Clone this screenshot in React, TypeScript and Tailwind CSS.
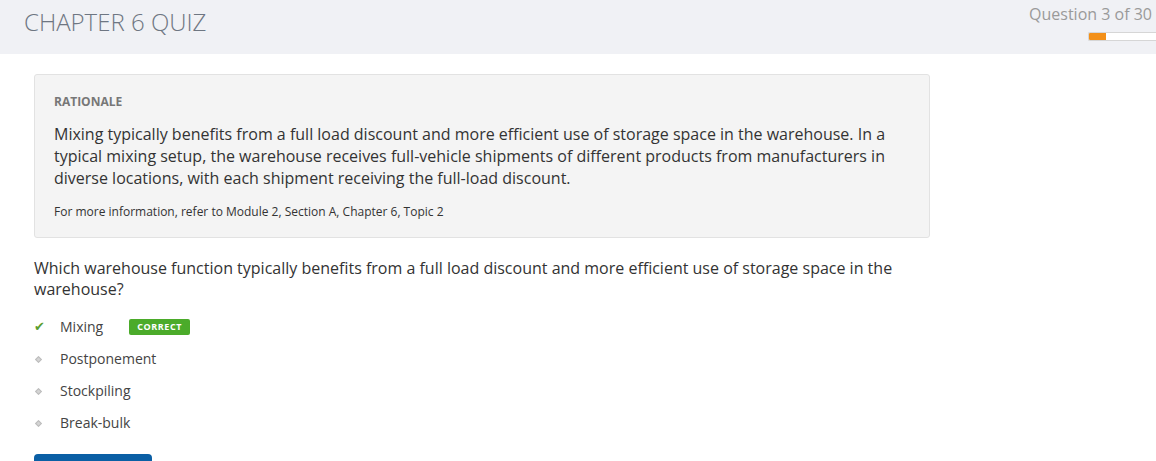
const options = [
  { label: "Mixing", correct: true },
  { label: "Postponement", correct: false },
  { label: "Stockpiling", correct: false },
  { label: "Break-bulk", correct: false },
];

const App = () => {
  return (
    <div className="min-h-screen bg-white font-['Open_Sans',_'Noto_Sans',_sans-serif] text-[#333]">
      {/* Header */}
      <header className="h-[54px] bg-[#f0f1f5] flex justify-between">
        <h1 className="pl-[24px] pt-[6px] text-[24px] font-light leading-[32px] text-[#6e7682]">
          CHAPTER 6 QUIZ
        </h1>
        <div className="flex flex-col items-end pt-[3px]">
          <div className="pr-[4px] text-[16px] leading-[22px] text-[#9a9a9a]">
            Question 3 of 30
          </div>
          <div className="mt-[7px] w-[68px] h-[9px] border border-[#d6d6d6] border-r-0 bg-white rounded-l-[2px] overflow-hidden">
            <div className="h-full w-[17px] bg-[#f39019]" />
          </div>
        </div>
      </header>

      <main className="px-[34px] pt-[20px] w-[930px] box-content">
        {/* Rationale card */}
        <div className="w-[896px] bg-[#f4f4f4] border border-[#e2e2e2] rounded-[3px] px-[19px] pt-[19px] pb-[17px]">
          <div className="text-[12px] font-bold leading-[16px] text-[#777]">
            RATIONALE
          </div>
          <p className="mt-[13px] text-[16px] leading-[22px] text-[#333]">
            Mixing typically benefits from a full load discount and more
            efficient use of storage space in the warehouse. In a typical mixing
            setup, the warehouse receives full-vehicle shipments of different
            products from manufacturers in diverse locations, with each shipment
            receiving the full-load discount.
          </p>
          <p className="mt-[15px] text-[12px] leading-[16px] text-[#333]">
            For more information, refer to Module 2, Section A, Chapter 6, Topic
            2
          </p>
        </div>

        {/* Question */}
        <p className="mt-[20px] w-[896px] text-[16px] leading-[21px] text-[#333]">
          Which warehouse function typically benefits from a full load discount
          and more efficient use of storage space in the warehouse?
        </p>

        <ul className="mt-[11px]">
          {options.map((option) => (
            <li key={option.label} className="h-[32px] flex items-center">
              <span className="w-[26px] flex items-center">
                {option.correct ? (
                  <span className="font-['DejaVu_Sans',_sans-serif] text-[13px] leading-[16px] text-[#5a9e2f]">
                    ✔
                  </span>
                ) : (
                  <span className="ml-[2px] w-[5px] h-[5px] rotate-45 bg-[#d4d4d4] border border-[#bdbdbd]" />
                )}
              </span>
              <span className="text-[14px] leading-[20px] text-[#444]">
                {option.label}
              </span>
              {option.correct && (
                <span className="ml-[26px] px-[8px] h-[16px] flex items-center rounded-[2px] bg-[#4bab2a] text-[9px] font-bold tracking-[0.6px] text-white">
                  CORRECT
                </span>
              )}
            </li>
          ))}
        </ul>

        <button className="mt-[15px] w-[118px] h-[36px] rounded-[4px] bg-[#0b5fa5]" />
      </main>
    </div>
  );
};

export default App;
